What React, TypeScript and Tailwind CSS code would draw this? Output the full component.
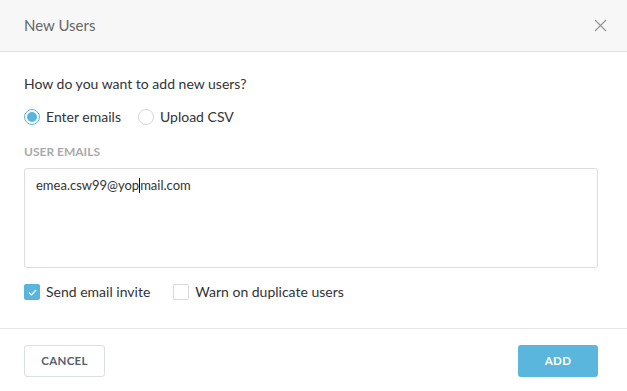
import { useState } from 'react'

export default function App() {
  const [mode, setMode] = useState<'emails' | 'csv'>('emails')
  const [invite, setInvite] = useState(true)
  const [warn, setWarn] = useState(false)

  return (
    <div
      className="w-[627px] h-[391px] bg-white text-[#333] overflow-hidden"
      style={{ fontFamily: 'Lato, "Open Sans", sans-serif' }}
    >
      {/* header */}
      <div className="h-[52px] bg-[#f7f7f7] border-b border-[#e3e3e3] flex items-center justify-between pl-6 pr-[17px]">
        <h2 className="text-[15px] text-[#666] leading-none">New Users</h2>
        <button className="w-5 h-5 flex items-center justify-center text-[#999]">
          <svg width="13" height="13" viewBox="0 0 13 13" fill="none" stroke="currentColor" strokeWidth="1.3">
            <path d="M1 1 L12 12 M12 1 L1 12" />
          </svg>
        </button>
      </div>

      {/* body */}
      <div className="pl-6 pr-[29px] pt-[22px] pb-7 border-b border-[#e6e6e6]">
        <p className="text-sm leading-5">How do you want to add new users?</p>

        <div className="flex items-center gap-[17px] mt-[15px] h-4 text-sm">
          <label className="flex items-center gap-[6px] cursor-pointer" onClick={() => setMode('emails')}>
            <span
              className={`w-4 h-4 rounded-full border flex items-center justify-center ${
                mode === 'emails' ? 'border-[#5ab5dc]' : 'border-[#d8d8d8]'
              }`}
            >
              {mode === 'emails' && <span className="w-[10px] h-[10px] rounded-full bg-[#5ab5dc]" />}
            </span>
            Enter emails
          </label>
          <label className="flex items-center gap-[6px] cursor-pointer" onClick={() => setMode('csv')}>
            <span
              className={`w-4 h-4 rounded-full border flex items-center justify-center ${
                mode === 'csv' ? 'border-[#5ab5dc]' : 'border-[#d8d8d8]'
              }`}
            >
              {mode === 'csv' && <span className="w-[10px] h-[10px] rounded-full bg-[#5ab5dc]" />}
            </span>
            Upload CSV
          </label>
        </div>

        <p className="mt-[19px] text-[12px] leading-4 font-bold text-[#aaa]">USER EMAILS</p>

        <div className="mt-2 h-[100px] border border-[#ddd] rounded-[3px] px-[11px] pt-[6px] text-[13px] leading-5 text-[#333]">
          emea.csw99@yop<span className="inline-block w-px h-[15px] bg-[#111] align-middle -mt-[2px]" />mail.com
        </div>

        <div className="flex items-center gap-[23px] mt-4 h-4 text-sm">
          <label className="flex items-center gap-[6px] cursor-pointer" onClick={() => setInvite(!invite)}>
            <span
              className={`w-4 h-4 rounded-[2px] flex items-center justify-center ${
                invite ? 'bg-[#5ab5dc]' : 'border border-[#d8d8d8]'
              }`}
            >
              {invite && (
                <svg width="9" height="7" viewBox="0 0 9 7" fill="none" stroke="white" strokeWidth="1.2">
                  <path d="M1 3.5 L3.5 6 L8 1" />
                </svg>
              )}
            </span>
            Send email invite
          </label>
          <label className="flex items-center gap-[6px] cursor-pointer" onClick={() => setWarn(!warn)}>
            <span
              className={`w-4 h-4 rounded-[2px] flex items-center justify-center ${
                warn ? 'bg-[#5ab5dc]' : 'border border-[#d8d8d8]'
              }`}
            >
              {warn && (
                <svg width="9" height="7" viewBox="0 0 9 7" fill="none" stroke="white" strokeWidth="1.2">
                  <path d="M1 3.5 L3.5 6 L8 1" />
                </svg>
              )}
            </span>
            Warn on duplicate users
          </label>
        </div>
      </div>

      {/* footer */}
      <div className="flex justify-between pl-6 pr-[29px] pt-4">
        <button className="w-[81px] h-8 border border-[#dcdfe3] rounded-[3px] text-[11.5px] font-bold text-[#556071] tracking-wide">
          CANCEL
        </button>
        <button className="w-[80px] h-8 rounded-[3px] bg-[#5ab6dc] text-white text-[11.5px] font-bold tracking-wide">
          ADD
        </button>
      </div>
    </div>
  )
}
